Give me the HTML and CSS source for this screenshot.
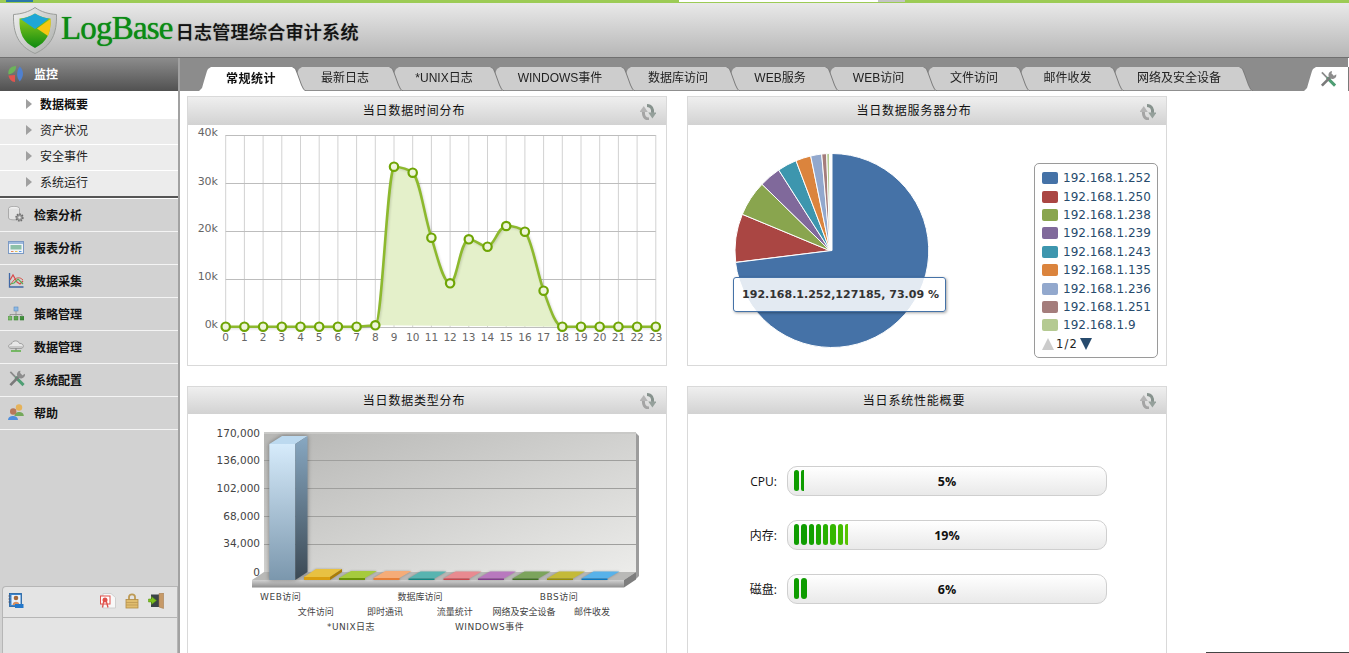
FILE: index.html
```html
<!DOCTYPE html>
<html lang="zh">
<head>
<meta charset="utf-8">
<title>LogBase 日志管理综合审计系统</title>
<link rel="stylesheet" href="styles.css">
</head>
<body>
<svg class="defs" width="0" height="0" aria-hidden="true">
  <defs>
    <symbol id="i-refresh" viewBox="0 0 16 16">
      <path d="M9 15 C4.500 15 3 11.500 3.500 7" fill="none" stroke="#a4a4a4" stroke-width="3"/>
      <path d="M-0.500 8 L3.800 2 L7.800 8Z" fill="#b5b5b5"/>
      <path d="M7 1.500 C11.500 1.500 13 5 12.500 9" fill="none" stroke="#87938e" stroke-width="3"/>
      <path d="M8.300 8.500 L12.400 14.500 L16.500 8.500Z" fill="#95a09b"/>
    </symbol>
    <symbol id="i-tools" viewBox="0 0 18 18">
      <path d="M2.500 1.500 L9 8" stroke="#8a8a8a" stroke-width="1.800"/>
      <path d="M8 7 L16.500 15.500" stroke="#4f9e74" stroke-width="3.200"/>
      <path d="M14 4 L2.500 15.500" stroke="#7a7a7a" stroke-width="2.800"/>
      <path d="M18 3.500 A4.300 4.300 0 1 1 13.200 0 L12.800 3.200 L14.800 5.200 Z" fill="#8d8d8d"/>
    </symbol>
    <linearGradient id="g-shield" x1="0" y1="0" x2="1" y2="1">
      <stop offset="0" stop-color="#f2f2f2"/><stop offset="1" stop-color="#a9aca9"/>
    </linearGradient>
    <linearGradient id="g-shieldgreen" x1="0" y1="0" x2="0" y2="1">
      <stop offset="0" stop-color="#9ed21e"/><stop offset="1" stop-color="#0c8a10"/>
    </linearGradient>
    <linearGradient id="g-wall" x1="0" y1="0" x2="1" y2="1">
      <stop offset="0" stop-color="#b6b6b4"/><stop offset="1" stop-color="#ececea"/>
    </linearGradient>
    <linearGradient id="g-front" x1="0" y1="0" x2="0" y2="1">
      <stop offset="0" stop-color="#d6ebfb"/><stop offset="1" stop-color="#7b97ad"/>
    </linearGradient>
    <linearGradient id="g-side" x1="0" y1="0" x2="0" y2="1">
      <stop offset="0" stop-color="#88a8c2"/><stop offset="1" stop-color="#3b4954"/>
    </linearGradient>
    <linearGradient id="g-floor" x1="0" y1="0" x2="0" y2="1">
      <stop offset="0" stop-color="#d2d2d2"/><stop offset="1" stop-color="#8e8e8e"/>
    </linearGradient>
  </defs>
</svg>

<div class="topstrip">
  <span class="ts ts-a"></span><span class="ts ts-b"></span><span class="ts ts-c"></span><span class="ts ts-d"></span><span class="ts ts-e"></span><span class="ts ts-f"></span>
</div>

<header class="header">
  <svg class="shield" viewBox="0 0 44 47">
    <path d="M22 0.500 C28 5 36 7 43.500 7.500 C44 26 39 39 22 46.500 C5 39 0 26 0.500 7.500 C8 7 16 5 22 0.500Z" fill="url(#g-shield)" stroke="#9a9d9a"/>
    <path d="M22 6.500 C27 9.500 32 11 37.500 11.500 C38 26 34 35 22 41 C10 35 6 26 6.500 11.500 C12 11 17 9.500 22 6.500Z" fill="url(#g-shieldgreen)"/>
    <path d="M22 6.500 C27 9.500 32 11 36 11.500 L22 22 L7.500 12 C12 11 17 9.500 22 6.500Z" fill="#1ea6d6"/>
    <path d="M37.500 12 C38 19 37 24 35 29 L24 21.500Z" fill="#f7c711"/>
  </svg>
  <span class="logo-word">LogBase</span>
  <span class="logo-title">日志管理综合审计系统</span>
</header>

<div class="main">
  <aside class="sidebar">
    <div class="monitor">
      <svg class="mi" viewBox="0 0 16 16">
        <path d="M0.500 8.500 C-0.500 3.500 3 0 8 0 C8.500 4 5.500 8 0.500 8.500Z" fill="#6cb35a"/>
        <path d="M0.500 9.500 L7 9 L7 16 C3.500 16 1 13 0.500 9.500Z" fill="#e0544f"/>
        <path d="M11.800 0.500 C15.500 4 16.500 10 11.800 15.500 C8 11 8.500 5 11.800 0.500Z" fill="#4f80cf"/>
      </svg>
      <span>监控</span>
    </div>
    <ul class="submenu">
      <li class="sub sub-on">数据概要</li>
      <li class="sub">资产状况</li>
      <li class="sub">安全事件</li>
      <li class="sub">系统运行</li>
    </ul>
    <ul class="menu">
      <li class="item">
        <svg class="mi" viewBox="0 0 16 16"><ellipse cx="6" cy="2.500" rx="5.500" ry="2.200" fill="#f0f0f0" stroke="#aaa"/><path d="M0.500 2.500 V12 C0.500 14.500 11.500 14.500 11.500 12 V2.500" fill="#e2e2e2" stroke="#aaa"/><circle cx="11.500" cy="11.500" r="3.300" fill="#9a9a9a" stroke="#6f6f6f" stroke-width="1.800" stroke-dasharray="1.500 1"/><circle cx="11.500" cy="11.500" r="1.200" fill="#e4e4e4"/></svg>
        <span>检索分析</span>
      </li>
      <li class="item">
        <svg class="mi" viewBox="0 0 16 16"><rect x="0.500" y="2.500" width="15" height="12" fill="#f1f5fa" stroke="#7c9ac4"/><rect x="1" y="3" width="14" height="2" fill="#9db9dc"/><rect x="2.500" y="6" width="11" height="4.500" fill="#8cc0a8"/><rect x="3" y="12" width="2.500" height="1" fill="#e58a5a"/><rect x="7" y="12" width="2.500" height="1" fill="#e3c45a"/><rect x="11" y="12" width="2.500" height="1" fill="#5a9ae3"/></svg>
        <span>报表分析</span>
      </li>
      <li class="item">
        <svg class="mi" viewBox="0 0 16 16"><path d="M1.500 1 V15 H15.500" fill="none" stroke="#3f68a6" stroke-width="1.300"/><path d="M2 8 L5 3 L9 10 L12 12 L15 9" fill="none" stroke="#d84a4a" stroke-width="1.200"/><path d="M2 13 L6 8 C9 5 12 5 15 8" fill="none" stroke="#d8564a" stroke-width="1"/><path d="M2.500 12 L6 11 L10 7 L15 12" fill="none" stroke="#58ab58" stroke-width="1.200"/></svg>
        <span>数据采集</span>
      </li>
      <li class="item">
        <svg class="mi" viewBox="0 0 16 16"><rect x="6" y="2" width="4" height="4" fill="#8db9e6" stroke="#5b8dc0" stroke-width=".6"/><path d="M8 6 V9.500 M2 11 V9.500 H14 V11 M8 9.500 V11" fill="none" stroke="#8a8a8a" stroke-width=".8"/><rect x="0" y="11.500" width="3.800" height="3.500" fill="#7cba6a" stroke="#4d9440" stroke-width=".6"/><rect x="6.100" y="11.500" width="3.800" height="3.500" fill="#5aa54e" stroke="#3d8533" stroke-width=".6"/><rect x="12.200" y="11.500" width="3.800" height="3.500" fill="#3f8f3a" stroke="#2f7a2c" stroke-width=".6"/></svg>
        <span>策略管理</span>
      </li>
      <li class="item">
        <svg class="mi" viewBox="0 0 16 16"><path d="M3 10.500 C-0.500 10 0 6 3.500 6 C4 2 10.500 2 11.500 5.500 C16 5 16.500 10 13 10.500Z" fill="#e8e8e8" stroke="#8f8f8f" stroke-width=".8"/><path d="M1.500 9 H14.500" stroke="#a8a8a8"/><path d="M8 10.500 V12.500" stroke="#777"/><path d="M3 13 H13" stroke="#5fb14a" stroke-width="1.600"/></svg>
        <span>数据管理</span>
      </li>
      <li class="item">
        <svg class="mi mi-tools" viewBox="0 0 18 18"><use href="#i-tools"/></svg>
        <span>系统配置</span>
      </li>
      <li class="item">
        <svg class="mi" viewBox="0 0 16 16"><circle cx="11" cy="3.500" r="3.200" fill="#e5b25a"/><path d="M6.500 12 C6 6.500 16 6.500 15.800 12Z" fill="#74a85a"/><circle cx="5.200" cy="7.500" r="3.200" fill="#b77858"/><path d="M0 16 C0 10.500 10 10.500 10 16Z" fill="#4f8edc"/></svg>
        <span>帮助</span>
      </li>
    </ul>
    <div class="userbox">
      <div class="userbar">
        <svg class="ub ub-a" viewBox="0 0 16 16"><rect x="1.500" y="0.500" width="12" height="13" fill="#3b84cc" stroke="#1f5f9e" stroke-width=".8"/><rect x="3.500" y="2" width="9" height="10" fill="#eaf2fa"/><circle cx="8" cy="5" r="2.300" fill="#a5683a"/><path d="M4.500 12 C4.500 7.500 11.500 7.500 11.500 12Z" fill="#d68f62"/><rect x="7" y="11" width="8.500" height="4" fill="#2477c9"/><path d="M0.500 3 H2.500 M0.500 6 H2.500 M0.500 9 H2.500" stroke="#556"/></svg>
        <span class="ub-space"></span>
        <svg class="ub ub-b" viewBox="0 0 16 16"><path d="M3 0.500 H11 L15.500 4.500 V15 H3Z" fill="#f8f8f8" stroke="#d0d0d0"/><rect x="0.500" y="3" width="9.500" height="8" fill="#fff" stroke="#e0504a"/><circle cx="5" cy="7" r="2.500" fill="#e0504a"/><path d="M3.500 9 L2.500 14.500 M6.500 9 L8 14.500" stroke="#e0504a" stroke-width="1.300"/></svg>
        <svg class="ub ub-c" viewBox="0 0 14 16"><path d="M4 7 V4 C4 0.500 10 0.500 10 4 V7" fill="none" stroke="#bd9a55" stroke-width="1.800"/><rect x="1" y="6.500" width="12" height="8.500" fill="#e0bd6e" stroke="#b18c45" stroke-width=".8"/><path d="M1 9.500 H13 M1 12 H13" stroke="#b89450" stroke-width=".7"/></svg>
        <svg class="ub ub-d" viewBox="0 0 16 16"><rect x="3" y="1.500" width="8" height="12.500" fill="#3b4348"/><path d="M11 0.500 L15.500 0 V15.500 L11 14Z" fill="#c79a68" stroke="#9c7344" stroke-width=".5"/><path d="M0.500 6 H3.500 V3.500 L8.500 7.500 L3.500 11.500 V9 H0.500Z" fill="#7ec11e" stroke="#4e8c0d" stroke-width=".5"/></svg>
      </div>
      <div class="userinfo"></div>
    </div>
  </aside>

  <section class="content">
    <nav class="tabbar">
      <div class="tabs">
        <a class="tab tab-on"><span>常规统计</span></a>
        <a class="tab"><span>最新日志</span></a>
        <a class="tab"><span>*UNIX日志</span></a>
        <a class="tab"><span>WINDOWS事件</span></a>
        <a class="tab"><span>数据库访问</span></a>
        <a class="tab"><span>WEB服务</span></a>
        <a class="tab"><span>WEB访问</span></a>
        <a class="tab"><span>文件访问</span></a>
        <a class="tab"><span>邮件收发</span></a>
        <a class="tab"><span>网络及安全设备</span></a>
      </div>
      <a class="tab tab-on tab-tool"><span><svg class="tool-icon" viewBox="0 0 18 18"><use href="#i-tools"/></svg></span></a>
    </nav>

    <div class="panels">
      <article class="panel">
        <h2 class="panel-head"><span class="panel-title">当日数据时间分布</span><svg class="refresh"><use href="#i-refresh"/></svg></h2>
        <svg class="chart" viewBox="188 125 478 240">
          <g class="vgrid">
            <path d="M244.400 135V327M263.100 135V327M281.800 135V327M300.500 135V327M319.200 135V327M337.900 135V327M356.600 135V327M375.300 135V327M394 135V327M412.700 135V327M431.400 135V327M450.100 135V327M468.800 135V327M487.500 135V327M506.200 135V327M524.900 135V327M543.600 135V327M562.300 135V327M581 135V327M599.700 135V327M618.400 135V327M637.100 135V327M655.800 135V327M225.700 135V327"/>
          </g>
          <g class="hgrid">
            <path d="M225.700 135.500H655.800M225.700 183.500H655.800M225.700 231.500H655.800M225.700 279.500H655.800M225.700 327.500H655.800"/>
          </g>
          <path class="area" d="M375.300 325.300 C382 325 387 175 394 166.700 C400 167 407 168 412.700 172.700 C420 180 424 215 431.400 237.700 C437 255 443 283 450.100 283.300 C457 283 460 241 468.800 239.300 C475 239 481 246.700 487.500 246.700 C494 246 498 227 506.200 226 C513 226 519 227 524.900 231.700 C532 240 537 272 543.600 290.700 C549 305 555 326 562.300 326.700 Z"/>
          <path class="line" d="M225.700 326.700 L356.600 326.700 L375.300 325.300 C382 325 387 175 394 166.700 C400 167 407 168 412.700 172.700 C420 180 424 215 431.400 237.700 C437 255 443 283 450.100 283.300 C457 283 460 241 468.800 239.300 C475 239 481 246.700 487.500 246.700 C494 246 498 227 506.200 226 C513 226 519 227 524.900 231.700 C532 240 537 272 543.600 290.700 C549 305 555 326 562.300 326.700 L655.800 326.700"/>
          <g class="dots">
            <circle cx="225.700" cy="326.700" r="4.200"/><circle cx="244.400" cy="326.700" r="4.200"/><circle cx="263.100" cy="326.700" r="4.200"/><circle cx="281.800" cy="326.700" r="4.200"/><circle cx="300.500" cy="326.700" r="4.200"/><circle cx="319.200" cy="326.700" r="4.200"/><circle cx="337.900" cy="326.700" r="4.200"/><circle cx="356.600" cy="326.700" r="4.200"/><circle cx="375.300" cy="325.300" r="4.200"/><circle cx="394" cy="166.700" r="4.200"/><circle cx="412.700" cy="172.700" r="4.200"/><circle cx="431.400" cy="237.700" r="4.200"/><circle cx="450.100" cy="283.300" r="4.200"/><circle cx="468.800" cy="239.300" r="4.200"/><circle cx="487.500" cy="246.700" r="4.200"/><circle cx="506.200" cy="226" r="4.200"/><circle cx="524.900" cy="231.700" r="4.200"/><circle cx="543.600" cy="290.700" r="4.200"/><circle cx="562.300" cy="326.700" r="4.200"/><circle cx="581" cy="326.700" r="4.200"/><circle cx="599.700" cy="326.700" r="4.200"/><circle cx="618.400" cy="326.700" r="4.200"/><circle cx="637.100" cy="326.700" r="4.200"/><circle cx="655.800" cy="326.700" r="4.200"/>
          </g>
          <g class="ylab">
            <text x="218" y="136">40k</text><text x="218" y="185">30k</text><text x="218" y="232">20k</text><text x="218" y="280">10k</text><text x="218" y="328">0k</text>
          </g>
          <g class="xlab">
            <text x="225.700" y="340.500">0</text><text x="244.400" y="340.500">1</text><text x="263.100" y="340.500">2</text><text x="281.800" y="340.500">3</text><text x="300.500" y="340.500">4</text><text x="319.200" y="340.500">5</text><text x="337.900" y="340.500">6</text><text x="356.600" y="340.500">7</text><text x="375.300" y="340.500">8</text><text x="394" y="340.500">9</text><text x="412.700" y="340.500">10</text><text x="431.400" y="340.500">11</text><text x="450.100" y="340.500">12</text><text x="468.800" y="340.500">13</text><text x="487.500" y="340.500">14</text><text x="506.200" y="340.500">15</text><text x="524.900" y="340.500">16</text><text x="543.600" y="340.500">17</text><text x="562.300" y="340.500">18</text><text x="581" y="340.500">19</text><text x="599.700" y="340.500">20</text><text x="618.400" y="340.500">21</text><text x="637.100" y="340.500">22</text><text x="655.800" y="340.500">23</text>
          </g>
        </svg>
      </article>

      <article class="panel">
        <h2 class="panel-head"><span class="panel-title">当日数据服务器分布</span><svg class="refresh"><use href="#i-refresh"/></svg></h2>
        <div class="pie-body">
          <svg class="pie" viewBox="688 125 346 240">
            <g class="slices">
              <path fill="#aa4643" d="M830 250.700 L735.700 262.300 A95 95 0 0 1 742.300 214.300Z"/>
              <path fill="#89a54e" d="M830 250.700 L742.300 214.300 A95 95 0 0 1 762 184.300Z"/>
              <path fill="#80699b" d="M830 250.700 L762 184.300 A95 95 0 0 1 778.700 170Z"/>
              <path fill="#3d96ae" d="M830 250.700 L778.700 170 A95 95 0 0 1 796 160.700Z"/>
              <path fill="#db843d" d="M830 250.700 L796 160.700 A95 95 0 0 1 810.700 156Z"/>
              <path fill="#92a8cd" d="M830 250.700 L810.700 156 A95 95 0 0 1 821.700 154Z"/>
              <path fill="#a47d7c" d="M830 250.700 L821.700 154 A95 95 0 0 1 826.700 153.700Z"/>
              <path fill="#b5ca92" d="M830 250.700 L826.700 153.700 A95 95 0 0 1 829.500 153.500Z"/>
              <path fill="#4572a7" d="M832 250.500 L832 153.500 A97 97 0 1 1 735.500 262.500Z"/>
            </g>
          </svg>
          <div class="legend">
            <div class="lg-row"><i class="sw sw1"></i>192.168.1.252</div>
            <div class="lg-row"><i class="sw sw2"></i>192.168.1.250</div>
            <div class="lg-row"><i class="sw sw3"></i>192.168.1.238</div>
            <div class="lg-row"><i class="sw sw4"></i>192.168.1.239</div>
            <div class="lg-row"><i class="sw sw5"></i>192.168.1.243</div>
            <div class="lg-row"><i class="sw sw6"></i>192.168.1.135</div>
            <div class="lg-row"><i class="sw sw7"></i>192.168.1.236</div>
            <div class="lg-row"><i class="sw sw8"></i>192.168.1.251</div>
            <div class="lg-row"><i class="sw sw9"></i>192.168.1.9</div>
            <div class="lg-page"><i class="tri-up"></i><span>1/2</span><i class="tri-down"></i></div>
          </div>
        </div>
        <div class="tooltip">192.168.1.252,127185, 73.09 %</div>
      </article>

      <article class="panel">
        <h2 class="panel-head"><span class="panel-title">当日数据类型分布</span><svg class="refresh"><use href="#i-refresh"/></svg></h2>
        <svg class="chart" viewBox="188 414 478 240">
          <path d="M636 433 L639 436 V576 L636 579Z" fill="#9c9c9c"/>
          <rect x="264" y="433" width="372" height="139" fill="url(#g-wall)"/>
          <path d="M264 433H636" stroke="#c9c9c7" stroke-width="2" fill="none"/>
          <path d="M264 460.500H636M264 488.500H636M264 516.500H636M264 544.500H636" stroke="#9f9f9d" fill="none"/>
          <path d="M252 580 L264 572 H636 L624 580Z" fill="#b9b9b7"/>
          <rect x="252" y="580" width="372" height="7.500" fill="url(#g-floor)"/>
          <path d="M624 587.500 V580 L636 572 V579.500Z" fill="#7e7e7e"/>
          <g class="bar-tall">
            <path d="M269.300 444 L282 436 H307.500 L295.300 444Z" fill="#bcd9ef"/>
            <rect x="269.300" y="444" width="26" height="136" fill="url(#g-front)"/>
            <path d="M295.300 444 L307.500 436 V572 L295.300 580Z" fill="url(#g-side)"/>
          </g>
          <g class="bar-flat">
            <path d="M304 577 L316 569 H342 L330 577Z" fill="#e8c142"/><rect x="304" y="577" width="26" height="3" fill="#d99e10"/><path d="M330 577 L342 569 V572 L330 580Z" fill="#a97c08"/>
            <path d="M339 578 L351 571 H377 L365 578Z" fill="#a6cb3e"/><rect x="339" y="578" width="26" height="2" fill="#6b9408"/>
            <path d="M373.500 578 L385.500 571 H411.500 L399.500 578Z" fill="#f5ac78"/><rect x="373.500" y="578" width="26" height="2" fill="#e57e38"/>
            <path d="M408.500 578.500 L420.500 571.500 H446.500 L434.500 578.500Z" fill="#58b4b0"/><rect x="408.500" y="578.500" width="26" height="1.500" fill="#128682"/>
            <path d="M443.500 578.500 L455.500 571.500 H481.500 L469.500 578.500Z" fill="#e88a90"/><rect x="443.500" y="578.500" width="26" height="1.500" fill="#c8464c"/>
            <path d="M478 578.500 L490 571.500 H516 L504 578.500Z" fill="#b878be"/><rect x="478" y="578.500" width="26" height="1.500" fill="#823c8c"/>
            <path d="M512.500 578.500 L524.500 571.500 H550.500 L538.500 578.500Z" fill="#7ca45c"/><rect x="512.500" y="578.500" width="26" height="1.500" fill="#3f6e22"/>
            <path d="M547 578.500 L559 571.500 H585 L573 578.500Z" fill="#c4ba38"/><rect x="547" y="578.500" width="26" height="1.500" fill="#968f08"/>
            <path d="M581.500 578.500 L593.500 571.500 H619.500 L607.500 578.500Z" fill="#58b2ea"/><rect x="581.500" y="578.500" width="26" height="1.500" fill="#0c78c0"/>
          </g>
          <g class="bar-y">
            <text x="260" y="437">170,000</text><text x="260" y="464">136,000</text><text x="260" y="492">102,000</text><text x="260" y="520">68,000</text><text x="260" y="547">34,000</text><text x="260" y="576">0</text>
          </g>
          <g class="bar-x">
            <text class="wide" x="280.700" y="600">WEB访问</text><text x="420" y="600">数据库访问</text><text class="wide" x="559" y="600">BBS访问</text>
            <text x="315.800" y="615">文件访问</text><text x="385" y="615">即时通讯</text><text x="454.700" y="615">流量统计</text><text x="524" y="615">网络及安全设备</text><text x="592" y="615">邮件收发</text>
            <text class="wide" x="351" y="629.500">*UNIX日志</text><text class="wide" x="489.600" y="629.500">WINDOWS事件</text>
          </g>
        </svg>
      </article>

      <article class="panel">
        <h2 class="panel-head"><span class="panel-title">当日系统性能概要</span><svg class="refresh"><use href="#i-refresh"/></svg></h2>
        <div class="perf">
          <div class="perf-row">
            <span class="perf-label">CPU:</span>
            <div class="meter"><i class="seg"></i><i class="seg seg-thin"></i><b class="meter-val">5%</b></div>
          </div>
          <div class="perf-row">
            <span class="perf-label">内存:</span>
            <div class="meter"><i class="seg"></i><i class="seg"></i><i class="seg"></i><i class="seg"></i><i class="seg"></i><i class="seg"></i><i class="seg"></i><i class="seg seg-thin"></i><b class="meter-val">19%</b></div>
          </div>
          <div class="perf-row">
            <span class="perf-label">磁盘:</span>
            <div class="meter"><i class="seg"></i><i class="seg"></i><b class="meter-val">6%</b></div>
          </div>
        </div>
      </article>
    </div>
  </section>
</div>
<div class="edge-line"></div>
</body>
</html>
```
FILE: styles.css
```css
* { box-sizing: border-box; }
html, body { margin: 0; padding: 0; height: 100%; }
body {
  position: relative;
  height: 653px;
  overflow: hidden;
  background: #fff;
  display: flex;
  flex-direction: column;
  font: 12px "Liberation Sans", "Noto Sans CJK SC", sans-serif;
  color: #222;
}
.defs { position: absolute; }
ul { list-style: none; margin: 0; padding: 0; }

/* top strip */
.topstrip { display: flex; height: 3px; flex: none; background: #9ccb55; }
.ts { display: block; height: 100%; }
.ts-a { width: 6px; }
.ts-b { width: 27px; height: 2px; background: #2a78a8; }
.ts-c { width: 646px; }
.ts-d { width: 199px; background: #fff; border-bottom: 1px solid #9ccb55; }
.ts-e { width: 27px; background: #c4c4c4; border-bottom: 1px solid #9ccb55; }
.ts-f { flex: 1; }

/* header */
.header {
  flex: none;
  height: 55px;
  display: flex;
  align-items: center;
  padding-left: 13px;
  background: linear-gradient(#e9e9e9, #b6b6b6);
  border-bottom: 1px solid #707070;
}
.shield { width: 44px; height: 47px; flex: none; }
.logo-word {
  margin-left: 4px;
  font: 33px "Liberation Serif", serif;
  letter-spacing: -0.8px;
  color: #0b8b14;
  text-shadow: 0 0 1px #0b8b14;
  position: relative;
  top: -2px;
}
.logo-title {
  margin-left: 3px;
  font-size: 18px;
  font-weight: 500;
  color: #111;
  letter-spacing: 0.3px;
  text-shadow: 0 0 1px #555;
  position: relative;
  top: 1px;
}

.main { flex: 1; display: flex; min-height: 0; }

/* sidebar */
.sidebar {
  flex: none;
  width: 180px;
  background: #d2d2d2;
  border-right: 2px solid #a2a2a2;
  display: flex;
  flex-direction: column;
}
.mi { width: 16px; height: 16px; flex: none; }
.mi-tools { width: 17px; height: 18px; }
.monitor {
  height: 33px;
  display: flex;
  align-items: center;
  gap: 10px;
  padding: 0 0 2px 8px;
  background: linear-gradient(#8c8c8c, #515151);
  color: #fff;
  font-weight: bold;
}
.submenu { background: #ececec; border-bottom: 2px solid #555; }
.sub {
  height: 26px;
  display: flex;
  align-items: center;
  padding: 0 0 4px 26px;
  border-top: 1px solid #fff;
  color: #222;
}
.sub::before {
  content: "";
  width: 0;
  height: 0;
  margin-right: 8px;
  border-style: solid;
  border-width: 5px 0 5px 6px;
  border-color: transparent transparent transparent #a0a0a0;
}
.sub-on { height: 27px; padding-bottom: 2px; background: #fff; border-top: 0; font-weight: bold; color: #111; }
.menu { border-top: 1px solid #fff; }
.item {
  height: 33px;
  display: flex;
  align-items: center;
  gap: 10px;
  padding: 0 0 2px 8px;
  border-bottom: 1px solid #f4f4f4;
  font-weight: bold;
  color: #111;
}
.mi-tools + span { margin-left: -1px; }
.userbox {
  margin: auto 0 0 2px;
  height: 67px;
  background: #e4e4e4;
  border: 1px solid #b6b6b6;
  border-bottom: 0;
  border-radius: 4px 0 0 0;
  display: flex;
  flex-direction: column;
}
.userbar {
  height: 31px;
  flex: none;
  display: flex;
  align-items: flex-start;
  padding: 6px 0 0 5px;
  border-bottom: 1px solid #b6b6b6;
}
.ub { width: 16px; height: 16px; flex: none; }
.ub-space { width: 76px; }
.ub-c { margin-left: 9px; width: 14px; }
.ub-d { margin-left: 9px; }
.userinfo { flex: 1; }

/* content */
.content { flex: 1; min-width: 0; display: flex; flex-direction: column; }
.tabbar {
  height: 33px;
  flex: none;
  margin-right: 1px;
  background: #8c8c8c;
  padding: 9px 0 0 19px;
  display: flex;
  justify-content: space-between;
}
.tabs {
  display: grid;
  grid-template-columns: 91px 97px 101px 131px 105px 99px 98px 93px 94px 129px;
  height: 24px;
}
.tab {
  position: relative;
  display: block;
  height: 24px;
  margin-right: -15px;
  filter: drop-shadow(1px 0 0 #7a7a7a);
}
.tab:nth-child(1) { z-index: 10; }
.tab:nth-child(2) { z-index: 9; }
.tab:nth-child(3) { z-index: 8; }
.tab:nth-child(4) { z-index: 7; }
.tab:nth-child(5) { z-index: 6; }
.tab:nth-child(6) { z-index: 5; }
.tab:nth-child(7) { z-index: 4; }
.tab:nth-child(8) { z-index: 3; }
.tab:nth-child(9) { z-index: 2; }
.tab:nth-child(10) { z-index: 1; }
.tab span {
  display: flex;
  align-items: center;
  justify-content: center;
  height: 100%;
  padding: 0 2px 4px 0;
  background: #cdcdcd;
  border-bottom: 1px solid #8f8f8f;
  color: #222;
  white-space: nowrap;
  clip-path: polygon(0 100%, 3px 21px, 5px 14px, 8px 4px, 9px 2px, 12px 0,
    calc(100% - 13px) 0, calc(100% - 10px) 2px, calc(100% - 8px) 7px,
    calc(100% - 4px) 18px, calc(100% - 2px) 22px, 100% 100%);
}
.tab-on span { background: #fff; border-bottom: 0; font-weight: bold; color: #111; letter-spacing: 0.5px; }
.tab-tool { width: 44px; margin-right: 0; flex: none; }
.tab-tool span {
  clip-path: polygon(0 100%, 3px 21px, 5px 14px, 8px 4px, 9px 2px, 12px 0, 100% 0, 100% 100%);
  padding: 0 0 0 3px;
}
.tool-icon { width: 18px; height: 17px; }

/* panels */
.panels {
  padding: 5px 0 0 7px;
  display: grid;
  grid-template-columns: 480px 480px;
  grid-template-rows: 270px 270px;
  gap: 20px;
}
.panel {
  position: relative;
  border: 1px solid #d9d9d9;
  background: #fff;
}
.panel-head {
  margin: 0;
  height: 28px;
  display: flex;
  align-items: center;
  padding-right: 10px;
  background: linear-gradient(#efefef, #d2d2d2);
  font-size: 12px;
  font-weight: normal;
  color: #111;
}
.panel:nth-child(n+3) .panel-head { height: 27px; }
.panel-title { flex: 1; text-align: center; letter-spacing: 0.8px; padding-bottom: 3px; }
.refresh { width: 16px; height: 16px; flex: none; margin-top: 1px; }
.chart { display: block; width: 478px; height: 240px; }

.vgrid path { stroke: #d2d2d2; stroke-width: 1; fill: none; }
.hgrid path { stroke: #bdbdbd; stroke-width: 1; fill: none; }
.area { fill: #e4f0ca; }
.line { fill: none; stroke: #8db92e; stroke-width: 2.6; filter: drop-shadow(1px 1px 1px rgba(0, 0, 0, 0.15)); }
.dots circle { fill: #eef5da; stroke: #6fa505; stroke-width: 2.2; }
.ylab text { font: 11px "DejaVu Sans", sans-serif; fill: #666; text-anchor: end; }
.xlab text { font: 10.5px "DejaVu Sans", sans-serif; fill: #666; text-anchor: middle; }

/* pie */
.pie-body { display: flex; align-items: flex-start; }
.pie { width: 346px; height: 240px; flex: none; display: block; }
.slices path { stroke: #fff; stroke-width: 1; }
.legend {
  margin-top: 38px;
  width: 124px;
  height: 195px;
  padding: 5px 0 0 7px;
  border: 1px solid #9a9a9a;
  border-radius: 5px;
  font: 12px "DejaVu Sans", sans-serif;
  color: #274b6d;
}
.lg-row { height: 18.4px; display: flex; align-items: center; gap: 5px; white-space: nowrap; }
.sw { width: 16px; height: 12px; border-radius: 2px; flex: none; }
.sw1 { background: #4572a7; }
.sw2 { background: #aa4643; }
.sw3 { background: #89a54e; }
.sw4 { background: #80699b; }
.sw5 { background: #3d96ae; }
.sw6 { background: #db843d; }
.sw7 { background: #92a8cd; }
.sw8 { background: #a47d7c; }
.sw9 { background: #b5ca92; }
.lg-page { display: flex; align-items: center; gap: 2px; height: 18px; color: #222; font-size: 11.5px; letter-spacing: 1.2px; }
.tri-up, .tri-down { width: 0; height: 0; border-style: solid; border-width: 0 6px 12px; border-color: transparent transparent #ccc; }
.tri-down { border-width: 12px 6px 0; border-color: #274b6d transparent transparent; }
.tooltip {
  position: absolute;
  left: 45px;
  top: 180px;
  width: 213px;
  height: 35px;
  padding-left: 2px;
  display: flex;
  align-items: center;
  justify-content: center;
  background: rgba(255, 255, 255, 0.85);
  border: 1px solid #4572a7;
  border-radius: 3px;
  box-shadow: 1px 1px 3px rgba(0, 0, 0, 0.35);
  font: bold 11px "DejaVu Sans", sans-serif;
  color: #333;
  white-space: nowrap;
}

/* 3d bars */
.bar-tall { filter: drop-shadow(0 0 2px rgba(0, 0, 0, 0.4)); }
.bar-flat { filter: drop-shadow(0 0 1px rgba(0, 0, 0, 0.25)); }
.bar-y text { font: 10.5px "DejaVu Sans", sans-serif; fill: #444; text-anchor: end; }
.bar-x text { font: 9px "DejaVu Sans", "Noto Sans CJK SC", sans-serif; fill: #444; text-anchor: middle; }
.bar-x .wide { letter-spacing: 0.5px; }

/* performance */
.perf { display: flex; flex-direction: column; gap: 24px; padding-top: 52px; }
.perf-row { display: flex; align-items: center; gap: 10px; }
.perf-label { width: 89px; text-align: right; font-family: "Open Sans", "Noto Sans CJK SC", sans-serif; color: #111; }
.meter {
  position: relative;
  width: 320px;
  height: 30px;
  padding: 3px 6px;
  display: flex;
  gap: 2px;
  border: 1px solid #cfcfcf;
  border-radius: 10px;
  background: linear-gradient(#fff, #e9e9e9);
}
.seg { width: 5.3px; height: 21px; border-radius: 3px; background: #0e9c00; flex: none; }
.seg:nth-child(3) { background: #12a000; }
.seg:nth-child(4) { background: #1ca800; }
.seg:nth-child(5) { background: #28b000; }
.seg:nth-child(6) { background: #34b600; }
.seg:nth-child(7) { background: #42bc00; }
.seg:nth-child(8) { background: #58c400; }
.seg-thin { width: 2.5px; border-radius: 2px 0 0 2px; }
.meter-val {
  position: absolute;
  inset: 0;
  display: flex;
  align-items: center;
  justify-content: center;
  font: bold 12.5px "Open Sans", sans-serif;
  color: #111;
}
.edge-line {
  position: absolute;
  right: 0;
  bottom: 0;
  width: 143px;
  height: 1px;
  background: #444;
}
```
